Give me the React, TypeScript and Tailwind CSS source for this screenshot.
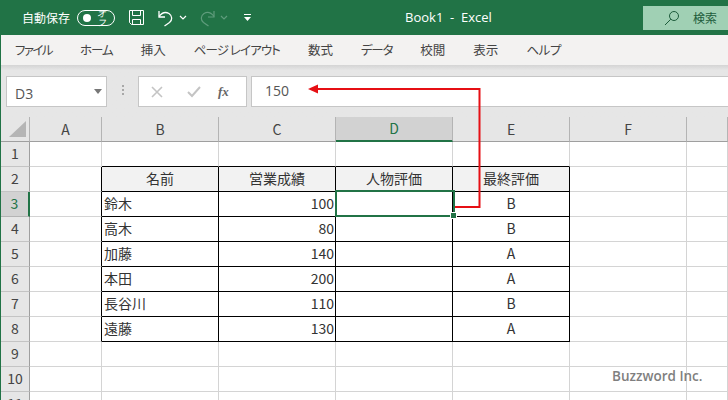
import React from 'react';

// kana in the reference is set tighter than Noto's, so each tab carries its own tracking
const tabs = [
  { label: 'ファイル', className: 'tracking-[-1.6px]' },
  { label: 'ホーム', className: 'tracking-[-1px]' },
  { label: '挿入', className: '' },
  { label: 'ページ レイアウト', className: 'tracking-[-0.9px]' },
  { label: '数式', className: '' },
  { label: 'データ', className: 'tracking-[-1.2px]' },
  { label: '校閲', className: '' },
  { label: '表示', className: '' },
  { label: 'ヘルプ', className: 'tracking-[-0.3px]' },
];
const columns = ['A', 'B', 'C', 'D', 'E', 'F', 'G'];

const rows: Record<number, string[]> = {
  2: ['名前', '営業成績', '人物評価', '最終評価'],
  3: ['鈴木', '100', '', 'B'],
  4: ['高木', '80', '', 'B'],
  5: ['加藤', '140', '', 'A'],
  6: ['本田', '200', '', 'A'],
  7: ['長谷川', '110', '', 'B'],
  8: ['遠藤', '130', '', 'A'],
};

const rowNumbers = [1, 2, 3, 4, 5, 6, 7, 8, 9, 10, 11];

// one sheet cell, borders depend on whether it touches the bordered table
function SheetCell({ row, col }: { row: number; col: number }) {
  const inTable = row >= 2 && row <= 8 && col >= 1 && col <= 4;
  const leftOfTable = row >= 2 && row <= 8 && col === 0;
  const aboveTable = row === 1 && col >= 1 && col <= 4;
  const right = inTable || leftOfTable ? 'border-r-black' : 'border-r-[#d4d4d4]';
  const bottom = inTable || aboveTable ? 'border-b-black' : 'border-b-[#d4d4d4]';
  const text = inTable ? rows[row][col - 1] : '';

  let align = 'justify-start pl-[2px]';
  if (row === 2 || col === 3 || col === 4) align = 'justify-center';
  else if (col === 2) align = 'justify-end pr-[1px]';

  return (
    <div
      className={`flex items-center overflow-hidden border-r border-b text-[14px] leading-none text-[#333333] ${right} ${bottom} ${align} ${
        row === 2 && inTable ? 'bg-[#f2f2f2] pb-[3px]' : 'bg-white pb-[2px]'
      }`}
    >
      {text}
    </div>
  );
}

export default function App() {
  return (
    <div className="relative flex h-[400px] w-[728px] flex-col overflow-hidden border-l border-[#217346] bg-white font-['Noto_Sans_CJK_JP',sans-serif]">
      {/* Title bar */}
      <div className="-ml-px flex h-[35px] shrink-0 items-center bg-[#217346] text-white">
        <span className="ml-[22px] text-[12px]">自動保存</span>
        <div className="ml-[7px] flex h-[16px] w-[38px] items-center rounded-full border border-white pl-[5px]">
          <span className="h-[8px] w-[8px] rounded-full bg-white" />
          <span className="ml-[6px] text-[9px] italic leading-none">オフ</span>
        </div>
        <svg className="ml-[13px]" width="17" height="17" viewBox="0 0 17 17" fill="none" stroke="white" strokeWidth="1">
          <path d="M1.5 1.5H15.5V15.5H3.5L1.5 13.5Z" />
          <path d="M4.5 1.5V6.5H12.5V1.5" />
          <path d="M4.5 15.5V10.5H12.5V15.5" />
        </svg>
        <svg className="ml-[12px]" width="17" height="18" viewBox="0 0 17 18" fill="none" stroke="white" strokeWidth="1.3">
          <path d="M2 2V8H8" />
          <path d="M2 7.5C5 3.5 9 2.8 12 4.5C15.5 7 15.5 11 12.5 13.5L7.5 17" />
        </svg>
        <svg className="ml-[5px]" width="8" height="5" viewBox="0 0 8 5" fill="none" stroke="white" strokeWidth="1.2">
          <path d="M1 1L4 4L7 1" />
        </svg>
        <svg className="ml-[12px]" width="17" height="18" viewBox="0 0 17 18" fill="none" stroke="#5f9c7c" strokeWidth="1.2">
          <path d="M15 2V8H9" />
          <path d="M15 7.5C12 3.5 8 2.8 5 4.5C1.5 7 1.5 11 4.5 13.5L9.5 17" />
        </svg>
        <svg className="ml-[4px]" width="8" height="5" viewBox="0 0 8 5" fill="none" stroke="#5f9c7c" strokeWidth="1.2">
          <path d="M1 1L4 4L7 1" />
        </svg>
        <svg className="ml-[15px]" width="9" height="9" viewBox="0 0 9 9" fill="white">
          <rect x="1" y="1" width="7" height="1" />
          <path d="M1 4H8L4.5 8Z" />
        </svg>
        <span className="ml-[153px] whitespace-pre font-['Open_Sans',sans-serif] text-[13px]">Book1  -  Excel</span>
        <div className="ml-auto flex h-[24px] w-[85px] items-center bg-[#a0d0b4] pl-[21px] text-[#1d5c3b]">
          <svg width="16" height="16" viewBox="0 0 16 16" fill="none" stroke="#1d5c3b" strokeWidth="1">
            <circle cx="10" cy="6" r="4.5" />
            <path d="M6.8 9.2L1 15" />
          </svg>
          <span className="ml-[13px] text-[12px]">検索</span>
        </div>
      </div>

      {/* Ribbon tabs */}
      <div className="flex h-[30px] shrink-0 items-center gap-[28px] bg-[#f3f2f1] pl-[14px] text-[12.5px] text-[#444444] [font-feature-settings:'palt']">
        {tabs.map((tab) => (
          <span key={tab.label} className={`whitespace-pre ${tab.className}`}>
            {tab.label}
          </span>
        ))}
      </div>

      {/* Formula bar */}
      <div className="flex h-[52px] shrink-0 items-start bg-[#e6e6e6] bg-gradient-to-b from-[#d4d4d4] from-0% to-[#e6e6e6] to-10% pl-[5px] pt-[11px]">
        <div className="flex h-[31px] w-[101px] items-center justify-between border border-[#c6c6c6] bg-white pl-[8px] pr-[4px] font-['Open_Sans',sans-serif] text-[14px] text-[#555555]">
          <span className="pt-[3px]">D3</span>
          <svg width="8" height="5" viewBox="0 0 8 5" fill="#777777">
            <path d="M0 0H8L4 5Z" />
          </svg>
        </div>
        <div className="ml-[15px] mt-[9px] flex w-[3px] flex-col gap-[2px]">
          <span className="h-[2px] w-[2px] bg-[#a8a8a8]" />
          <span className="h-[2px] w-[2px] bg-[#a8a8a8]" />
          <span className="h-[2px] w-[2px] bg-[#a8a8a8]" />
        </div>
        <div className="ml-[13px] flex h-[31px] w-[109px] items-center border border-[#c6c6c6] bg-white pl-[12px]">
          <svg width="12" height="12" viewBox="0 0 12 12" fill="none" stroke="#c4c4c4" strokeWidth="1.6">
            <path d="M1 1L11 11M11 1L1 11" />
          </svg>
          <svg className="ml-[24px]" width="14" height="12" viewBox="0 0 14 12" fill="none" stroke="#c4c4c4" strokeWidth="2">
            <path d="M1 6L5 10L13 1" />
          </svg>
          <span className="ml-[17px] font-['Liberation_Serif',serif] text-[13px] font-bold italic leading-none text-[#666666]">fx</span>
        </div>
        <div className="ml-[4px] flex h-[31px] flex-1 items-center border border-r-0 border-[#c6c6c6] bg-white pb-[2px] pl-[13px] font-['Open_Sans',sans-serif] text-[14px] text-[#555555]">
          150
        </div>
      </div>

      {/* Sheet */}
      <div className="grid flex-1 grid-cols-[29px_72px_117px_117px_117px_117px_117px_1fr] grid-rows-[25px_repeat(11,25px)]">
        <div className="flex items-end justify-end border-b border-r border-b-[#9f9f9f] border-r-[#b4b4b4] bg-[#e6e6e6] pb-[4px] pr-[3px]">
          <svg width="17" height="16" viewBox="0 0 17 16" fill="#b5b5b5">
            <path d="M17 0V16H0Z" />
          </svg>
        </div>
        {columns.map((col) => (
          <div
            key={col}
            className={
              col === 'D'
                ? 'flex items-center justify-center border-b-2 border-r border-b-[#217346] border-r-[#b4b4b4] bg-[#d2d2d2] text-[14px] text-[#217346]'
                : 'flex items-center justify-center border-b border-r border-b-[#9f9f9f] border-r-[#b4b4b4] bg-[#e6e6e6] text-[14px] text-[#444444]'
            }
          >
            {col === 'G' ? '' : col}
          </div>
        ))}

        {rowNumbers.map((row) => (
          <React.Fragment key={row}>
            <div
              className={
                row === 3
                  ? 'flex items-center justify-center overflow-hidden border-b border-r-2 border-b-[#b4b4b4] border-r-[#217346] bg-[#d2d2d2] pb-[2px] text-[14px] leading-none text-[#217346]'
                  : 'flex items-center justify-center overflow-hidden border-b border-r border-b-[#c4c4c4] border-r-[#9f9f9f] bg-[#e6e6e6] pb-[2px] text-[14px] leading-none text-[#444444]'
              }
            >
              {row}
            </div>
            {columns.map((_, col) => (
              <SheetCell key={col} row={row} col={col} />
            ))}
          </React.Fragment>
        ))}
      </div>

      {/* Selected cell D3 */}
      <div className="pointer-events-none absolute left-[334px] top-[190px] h-[27px] w-[120px] border-2 border-[#217346]" />
      <div className="pointer-events-none absolute left-[449px] top-[212px] h-[7px] w-[7px] border border-white bg-[#217346]" />

      {/* Red annotation arrow */}
      <svg className="pointer-events-none absolute left-0 top-0" width="727" height="400" fill="none">
        <path d="M454 207H478.5V89H315" stroke="#e60f14" strokeWidth="2" />
        <path d="M307 89L317 84.5V93.5Z" fill="#e60f14" />
      </svg>

      {/* Watermark */}
      <span className="absolute left-[611px] top-[366px] font-['Open_Sans',sans-serif] text-[13.5px] font-semibold text-[#7f7f7f]">
        Buzzword Inc.
      </span>
    </div>
  );
}
